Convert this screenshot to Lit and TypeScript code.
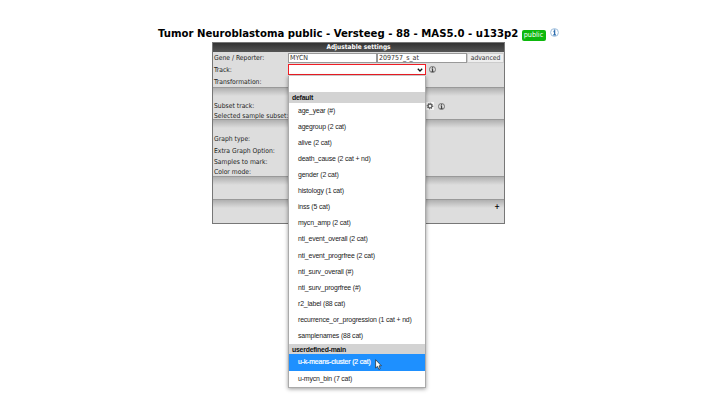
import { LitElement, html, css } from "lit";
import { customElement } from "lit/decorators.js";
import { classMap } from "lit/directives/class-map.js";

@customElement("info-icon")
class InfoIcon extends LitElement {
  static styles = css`
    :host { display: block; width: 7px; height: 7px; color: #333; --ring: #555; }
    svg { display: block; width: 100%; height: 100%; }
    circle { stroke: var(--ring); }
  `;
  render() {
    return html`<svg viewBox="0 0 14 14" fill="none" stroke="currentColor">
      <circle cx="7" cy="7" r="6.1" stroke-width="1.5" />
      <path d="M5.4 5.8H7.2V10.6M5 10.8H9.2" stroke-width="2" />
      <path d="M7.1 2.3V4.5" stroke-width="2.2" />
    </svg>`;
  }
}

interface Group { label: string; options: string[]; }

const groups: Group[] = [
  {
    label: "default",
    options: [
      "age_year (#)", "agegroup (2 cat)", "alive (2 cat)", "death_cause (2 cat + nd)",
      "gender (2 cat)", "histology (1 cat)", "inss (5 cat)", "mycn_amp (2 cat)",
      "nti_event_overall (2 cat)", "nti_event_progrfree (2 cat)", "nti_surv_overall (#)",
      "nti_surv_progrfree (#)", "r2_label (88 cat)", "recurrence_or_progression (1 cat + nd)",
      "samplenames (88 cat)",
    ],
  },
  { label: "userdefined-main", options: ["u-k-means-cluster (2 cat)", "u-mycn_bin (7 cat)"] },
];

@customElement("track-menu")
class TrackMenu extends LitElement {
  static styles = css`
    :host {
      display: block; box-sizing: border-box; width: 138px; height: 312px;
      background: #fff; border: 1px solid #aaa; border-top: 0;
      box-shadow: 0 1px 4px rgba(0, 0, 0, 0.4);
      font: 6.9px "Liberation Sans", Arial, sans-serif; letter-spacing: -0.16px; color: #222;
    }
    .blank { height: 16.8px; }
    .group {
      height: 10.4px; line-height: 11px; padding-left: 3px; background: #d3d3d3;
      font-weight: bold; color: #111; letter-spacing: -0.22px;
    }
    .option { height: 16.1px; line-height: 16.6px; padding-left: 9px; white-space: nowrap; }
    .selected { background: #1e90ff; color: #fff; -webkit-text-stroke: 0.2px #fff; }
  `;
  render() {
    return html`<div class="blank"></div>
      ${groups.map((g) => html`
        <div class="group">${g.label}</div>
        ${g.options.map((o) => html`<div class=${classMap({ option: true, selected: o.startsWith("u-k-") })}>${o}</div>`)}
      `)}`;
  }
}

@customElement("app-root")
class AppRoot extends LitElement {
  static styles = css`
    :host {
      display: block; position: relative; width: 720px; height: 416px; overflow: hidden;
      background: #fff; font: 6.75px "DejaVu Sans Condensed", "DejaVu Sans", sans-serif; color: #222;
    }
    .title {
      display: flex; align-items: center; height: 14px; padding: 27px 0 0 158px;
      white-space: nowrap; color: #000;
    }
    h1 { margin: 0; font: bold 10.15px/14px "DejaVu Sans", sans-serif; width: 363.5px; }
    .badge {
      box-sizing: border-box; width: 24px; height: 11px; margin-top: 2px; border-radius: 2px;
      background: #0db80d; color: #fff; font-size: 7.2px; line-height: 10.4px; text-align: center;
    }
    .title info-icon { width: 9px; height: 9px; margin: -4px 0 0 4px; color: #2f6fb0; --ring: #9bbcdc; }
    .panel {
      box-sizing: border-box; width: 293px; height: 182px; margin: 1px 0 0 212px;
      border: 1px solid #777; background: #ddd; display: flex; flex-direction: column;
    }
    .head {
      height: 9px; line-height: 9.5px; text-align: center; font-weight: bold; font-size: 6.5px; color: #fff;
      background: linear-gradient(#333, #555);
    }
    .section {
      box-sizing: border-box; border-top: 1px solid #999; padding-left: 1px;
      background: linear-gradient(#b0b0b0, #ddd 8px);
    }
    .section.first { border-top: 0; background: #ddd; }
    .row { display: flex; align-items: center; white-space: nowrap; }
    .label { width: 74px; }
    .field {
      box-sizing: border-box; height: 10px; border: 1px solid #999; background: #fff;
      font-size: 7px; line-height: 8px; padding-left: 1px; color: #333;
    }
    .gene { width: 89px; }
    .reporter { width: 90px; }
    .button { width: 37px; background: #eee; border-color: #ccc; text-align: center; padding: 0; font-size: 6.75px; }
    .select {
      box-sizing: border-box; width: 138px; height: 11px; border: 1px solid #f01c24;
      background: #fff; display: flex; align-items: center; justify-content: flex-end; padding-right: 2px;
    }
    .select svg { width: 6px; height: 4px; }
    .row info-icon { margin-left: 3px; }
    .row .gear + info-icon { margin-left: 4px; }
    .gear { width: 8px; height: 8px; background: #f5f5f5; margin-left: 138px; }
    .plus { text-align: right; padding-right: 4px; font-weight: bold; height: 13px; line-height: 13px; font-size: 7.5px; color: #000; }
    track-menu { position: absolute; left: 288px; top: 75.5px; }
    .cursor { position: absolute; left: 375px; top: 359px; width: 7px; height: 11px; }
  `;
  row(label: string, height: number, extra: unknown = "") {
    return html`<div class="row" style="height:${height}px"><span class="label">${label}</span>${extra}</div>`;
  }
  render() {
    const gear = html`<svg class="gear" viewBox="0 0 16 16" fill="none" stroke="#333">
      <circle cx="8" cy="8" r="4" stroke-width="2" />
      <circle cx="8" cy="8" r="5.6" stroke-width="1.8" stroke-dasharray="2.2 2.2" />
    </svg>`;
    return html`
      <div class="title">
        <h1>Tumor Neuroblastoma public - Versteeg - 88 - MAS5.0 - u133p2</h1>
        <span class="badge">public</span><info-icon></info-icon>
      </div>
      <div class="panel">
        <div class="head">Adjustable settings</div>
        <div class="section first" style="height:35px">
          ${this.row("Gene / Reporter:", 11, html`<span class="field gene">MYCN</span><span class="field reporter">209757_s_at</span><span class="field button">advanced</span>`)}
          ${this.row("Track:", 13, html`<span class="select"><svg viewBox="0 0 6 4" fill="none" stroke="#111" stroke-width="1.3"><path d="M.8 .7L3 3L5.2 .7" /></svg></span><info-icon></info-icon>`)}
          ${this.row("Transformation:", 11)}
        </div>
        <div class="section" style="height:32px;padding-top:13px">
          ${this.row("Subset track:", 10, html`${gear}<info-icon></info-icon>`)}
          ${this.row("Selected sample subset:", 9)}
        </div>
        <div class="section" style="height:57px;padding-top:13px">
          ${this.row("Graph type:", 12)}
          ${this.row("Extra Graph Option:", 12)}
          ${this.row("Samples to mark:", 10)}
          ${this.row("Color mode:", 10)}
        </div>
        <div class="section" style="height:23px"></div>
        <div class="section" style="height:24px"><div class="plus">+</div></div>
      </div>
      <track-menu></track-menu>
      <svg class="cursor" viewBox="0 0 7 11"><path d="M.6 .7V9L2.5 7.3L3.8 10.3L5.2 9.7L4 6.8H6.4Z" fill="#fff" stroke="#222" stroke-width=".7" /></svg>
    `;
  }
}
